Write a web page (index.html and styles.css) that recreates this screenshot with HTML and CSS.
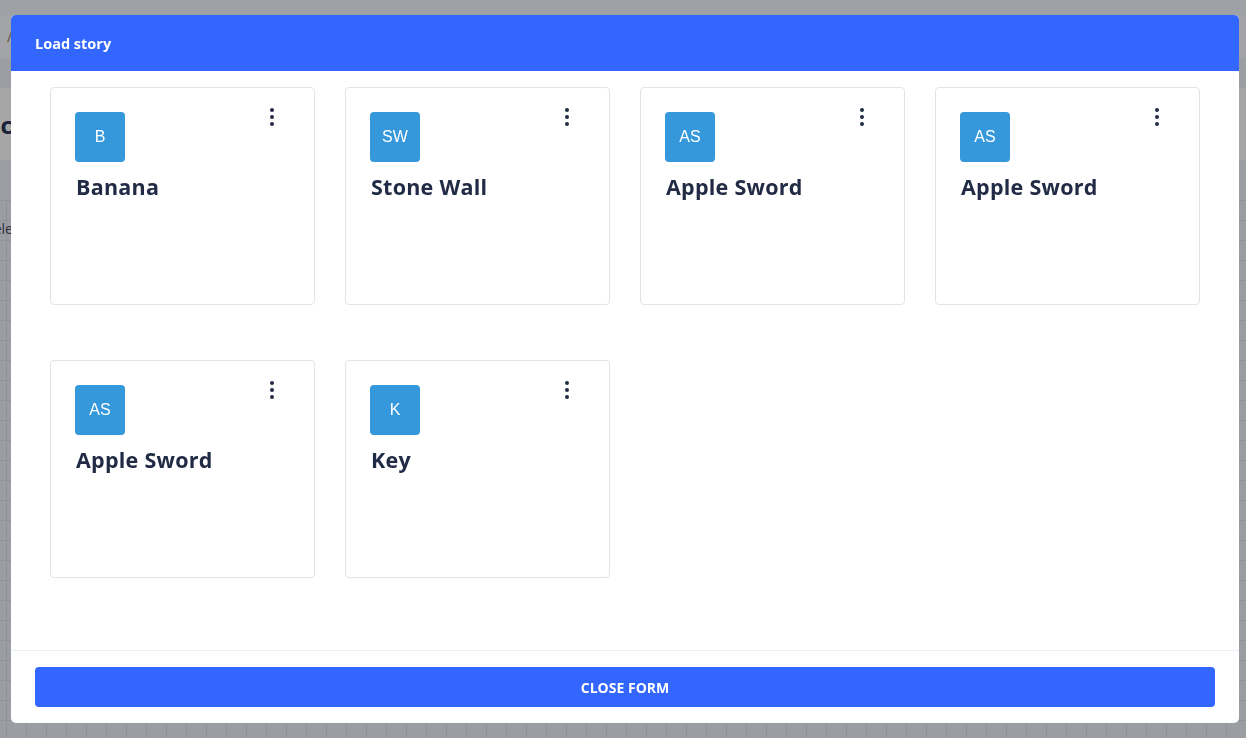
FILE: index.html
```html
<!DOCTYPE html>
<html>
<head>
<meta charset="utf-8">
<link rel="stylesheet" href="styles.css">
</head>
<body>
<div class="page">
  <div class="band band-top"></div>
  <div class="band band-nav"><span class="crumb">/</span></div>
  <div class="band band-dark"></div>
  <div class="band band-head"><span class="page-title">Stoc</span></div>
  <div class="band band-dark2"></div>
  <div class="grid-area"><span class="grid-text">Sele</span></div>
</div>

<div class="modal">
  <div class="modal-header">Load story</div>
  <div class="modal-body">
    <div class="cards">
      <div class="card">
        <div class="card-top"><div class="avatar">B</div><svg class="kebab" width="24" height="24" viewBox="0 0 24 24"><circle cx="12" cy="5" r="2"/><circle cx="12" cy="12" r="2"/><circle cx="12" cy="19" r="2"/></svg></div>
        <div class="card-title">Banana</div>
      </div>
      <div class="card">
        <div class="card-top"><div class="avatar">SW</div><svg class="kebab" width="24" height="24" viewBox="0 0 24 24"><circle cx="12" cy="5" r="2"/><circle cx="12" cy="12" r="2"/><circle cx="12" cy="19" r="2"/></svg></div>
        <div class="card-title">Stone Wall</div>
      </div>
      <div class="card">
        <div class="card-top"><div class="avatar">AS</div><svg class="kebab" width="24" height="24" viewBox="0 0 24 24"><circle cx="12" cy="5" r="2"/><circle cx="12" cy="12" r="2"/><circle cx="12" cy="19" r="2"/></svg></div>
        <div class="card-title">Apple Sword</div>
      </div>
      <div class="card">
        <div class="card-top"><div class="avatar">AS</div><svg class="kebab" width="24" height="24" viewBox="0 0 24 24"><circle cx="12" cy="5" r="2"/><circle cx="12" cy="12" r="2"/><circle cx="12" cy="19" r="2"/></svg></div>
        <div class="card-title">Apple Sword</div>
      </div>
      <div class="card">
        <div class="card-top"><div class="avatar">AS</div><svg class="kebab" width="24" height="24" viewBox="0 0 24 24"><circle cx="12" cy="5" r="2"/><circle cx="12" cy="12" r="2"/><circle cx="12" cy="19" r="2"/></svg></div>
        <div class="card-title">Apple Sword</div>
      </div>
      <div class="card">
        <div class="card-top"><div class="avatar">K</div><svg class="kebab" width="24" height="24" viewBox="0 0 24 24"><circle cx="12" cy="5" r="2"/><circle cx="12" cy="12" r="2"/><circle cx="12" cy="19" r="2"/></svg></div>
        <div class="card-title">Key</div>
      </div>
    </div>
  </div>
  <div class="modal-footer">
    <button class="close-btn">Close form</button>
  </div>
</div>
</body>
</html>
```

FILE: styles.css
```css
* { box-sizing: border-box; }
html, body { margin: 0; padding: 0; }
body {
  width: 1246px;
  height: 738px;
  overflow: hidden;
  font-family: "Open Sans", "Liberation Sans", sans-serif;
  background: #9a9da2;
}
.page { display: flex; flex-direction: column; height: 738px; }
.band { flex: none; display: flex; align-items: center; }
.band-top { height: 15px; background: #9ea1a5; }
.band-nav { height: 43px; background: #a2a4a7; }
.crumb { margin-left: 7px; color: #5a4a3a; font-size: 14px; }
.band-dark { height: 30px; background: #9b9ea2; }
.band-head { height: 72px; background: #a6a6a6; }
.page-title { margin-left: -38px; font-size: 24px; font-weight: 700; color: #1a2138; }
.band-dark2 { height: 40px; background: #9b9ea2; }
.grid-area {
  flex: 1;
  background-color: #9a9da2;
  background-image:
    linear-gradient(to right, #8f9297 1px, transparent 1px),
    linear-gradient(to bottom, #8f9297 1px, transparent 1px);
  background-size: 20px 20px;
  background-position: 6px 0;
  padding-top: 17px;
}
.grid-text { margin-left: -14px; font-size: 14px; color: #2d2d3a; }

.modal {
  position: fixed;
  left: 11px;
  top: 15px;
  width: 1228px;
  height: 708px;
  background: #fff;
  border-radius: 5px;
  overflow: hidden;
  display: flex;
  flex-direction: column;
}
.modal-header {
  flex: none;
  height: 56px;
  background: #3366ff;
  color: #fff;
  font-size: 14.5px;
  font-weight: 700;
  display: flex;
  align-items: center;
  padding: 0 24px;
}
.modal-body {
  flex: 1;
  padding: 16px 39px 0;
}
.cards {
  display: grid;
  grid-template-columns: repeat(4, 265px);
  column-gap: 30px;
  row-gap: 55px;
}
.card {
  height: 218px;
  border: 1px solid #e2e4ec;
  border-radius: 4px;
  padding: 24px 24px;
}
.card-top {
  display: flex;
  justify-content: space-between;
  align-items: flex-start;
}
.avatar {
  width: 50px;
  height: 50px;
  border-radius: 4px;
  background: #3498db;
  color: #fff;
  font-family: "Liberation Sans", Arial, sans-serif;
  font-size: 16px;
  display: flex;
  align-items: center;
  justify-content: center;
}
.kebab {
  fill: #222b45;
  margin-top: -7px;
  margin-right: 6px;
}
.card-title {
  margin-top: 12px;
  margin-left: 1px;
  font-size: 21.5px;
  line-height: 26px;
  font-weight: 700;
  letter-spacing: 0.25px;
  color: #222b45;
}
.modal-footer {
  flex: none;
  border-top: 1px solid #edf1f7;
  padding: 16px 24px;
}
.close-btn {
  display: block;
  width: 100%;
  height: 40px;
  border: none;
  border-radius: 4px;
  background: #3366ff;
  color: #fff;
  font-family: "Open Sans", "Liberation Sans", sans-serif;
  font-size: 14px;
  font-weight: 700;
  text-transform: uppercase;
}
```
